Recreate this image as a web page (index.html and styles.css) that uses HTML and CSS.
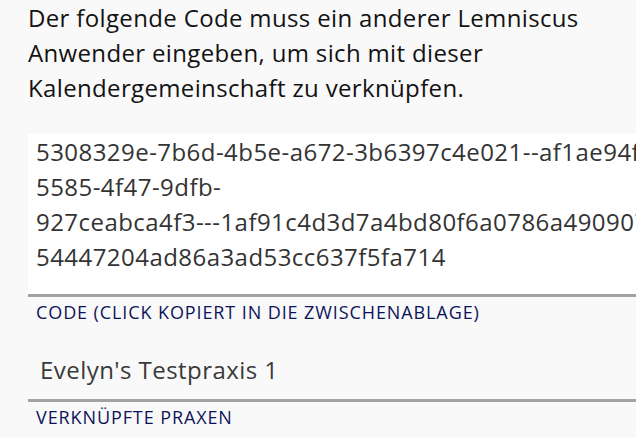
FILE: index.html
```html
<!DOCTYPE html>
<html lang="de">
<head>
    <meta charset="UTF-8">
    <meta name="viewport" content="width=device-width, initial-scale=1.0">
    <title>Kalendergemeinschaft</title>
    <link rel="stylesheet" href="styles.css">
</head>
<body>
    <p class="intro">Der folgende Code muss ein anderer Lemniscus Anwender eingeben, um sich mit dieser Kalendergemeinschaft zu verknüpfen.</p>

    <div class="field">
        <div class="field-value code">5308329e-7b6d-4b5e-a672-3b6397c4e021--af1ae94f-
5585-4f47-9dfb-
927ceabca4f3---1af91c4d3d7a4bd80f6a0786a490907-
54447204ad86a3ad53cc637f5fa714</div>
        <div class="field-label">Code (Click kopiert in die Zwischenablage)</div>
    </div>

    <div class="field">
        <div class="field-value plain">Evelyn's Testpraxis 1</div>
        <div class="field-label">Verknüpfte Praxen</div>
    </div>
</body>
</html>
```

FILE: styles.css
```css
body {
    margin: 0;
    background-color: #f9f9f9;
    font-family: "Open Sans", "Noto Sans", sans-serif;
}
.intro {
    margin: 0 0 29px;
    padding: 0 28px;
    font-size: 24px;
    line-height: 35px;
    letter-spacing: 0.35px;
    color: #131313;
}
.field {
    margin-left: 28px;
    overflow: hidden;
}
.field-value {
    font-size: 24px;
    line-height: 35px;
    letter-spacing: 0.45px;
    border-bottom: 3px solid #a2a2a2;
}
.field-value.code {
    background: white;
    color: #333;
    padding: 0 8px 20px;
    white-space: pre;
}
.field-value.plain {
    color: #3a3a3a;
    padding: 0 12px 12px;
}
.field-label {
    font-size: 18px;
    line-height: 24px;
    letter-spacing: 0.9px;
    padding: 3px 0 0 8px;
    margin-bottom: 28px;
    color: #0c1459;
    text-transform: uppercase;
}
```
